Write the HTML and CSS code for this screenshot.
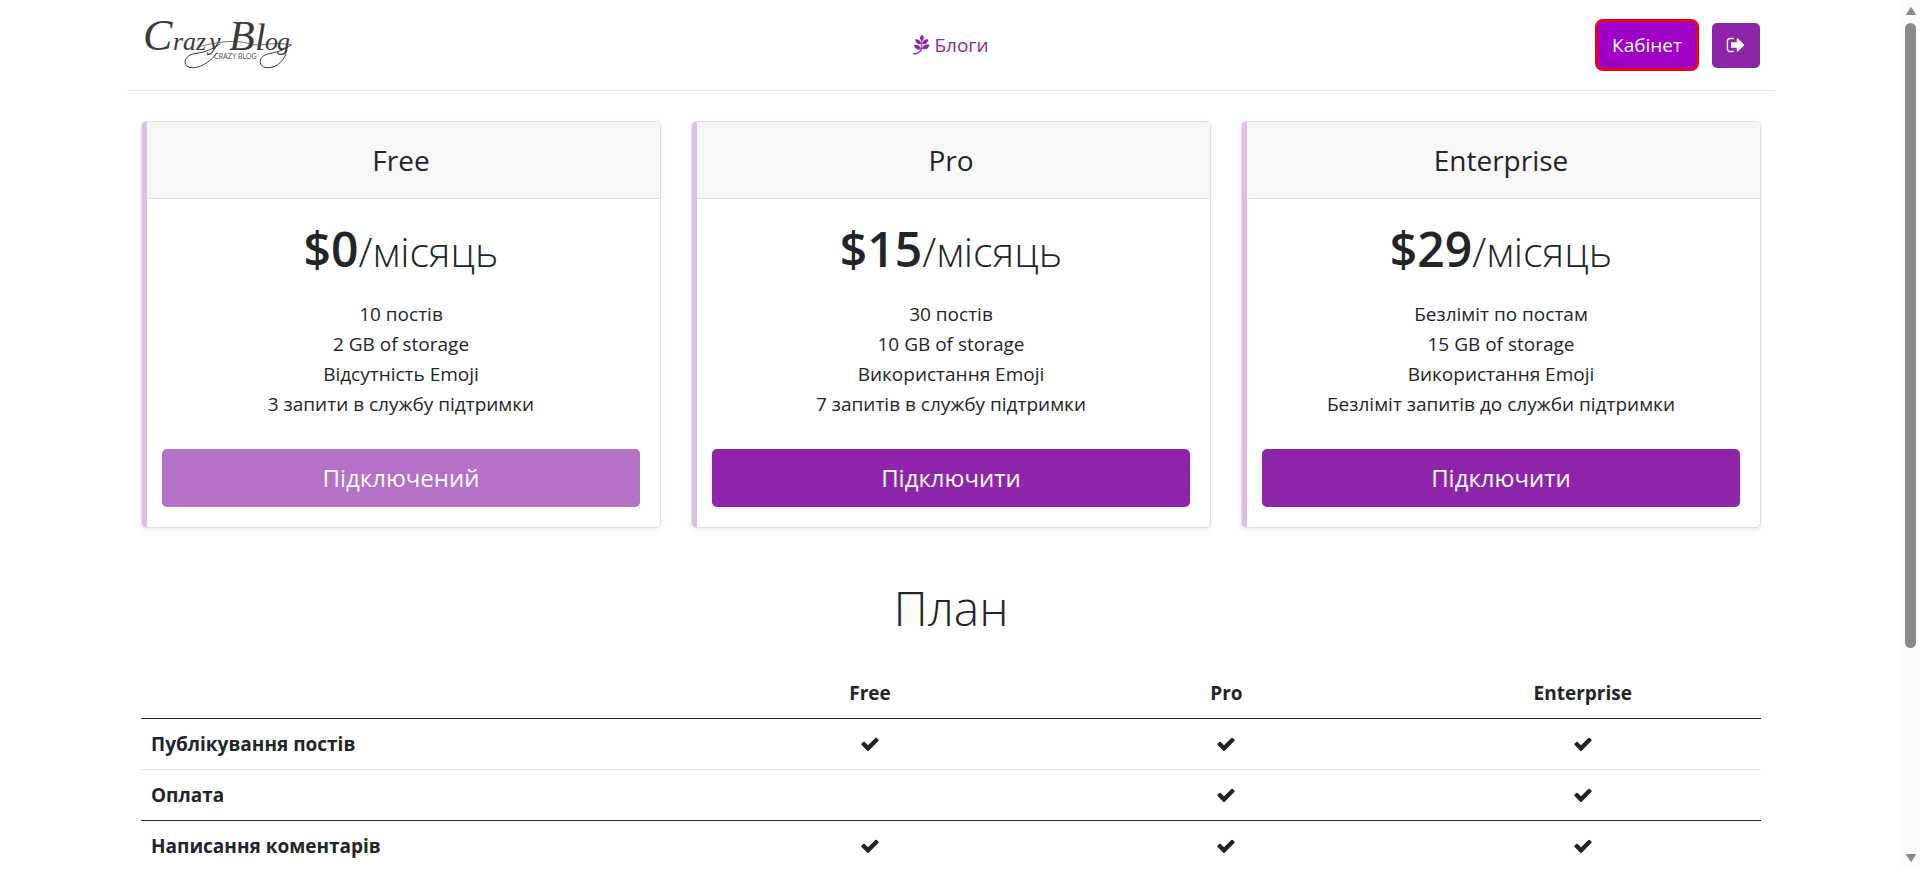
FILE: index.html
```html
<!DOCTYPE html>
<html lang="uk">
<head>
<meta charset="utf-8">
<meta name="viewport" content="width=device-width, initial-scale=1">
<title>Crazy Blog</title>
<link rel="stylesheet" href="styles.css">
</head>
<body>
<svg class="sprite" aria-hidden="true">
  <symbol id="check" viewBox="0 0 1792 1792"><path d="M1671 566q0 40-28 68l-724 724-136 136q-28 28-68 28t-68-28l-136-136-362-362q-28-28-28-68t28-68l136-136q28-28 68-28t68 28l294 295 656-657q28-28 68-28t68 28l136 136q28 28 28 68z"/></symbol>
</svg>
<div class="page">
  <div class="container">
    <header class="header">
      <a class="logo" href="#" aria-label="Crazy Blog">
        <svg width="150" height="52" viewBox="0 0 150 52" fill="none" stroke="#3a3a3a" stroke-linecap="round">
          <text class="logo-script" y="31" stroke="none"><tspan x="1" font-size="44">C</tspan><tspan x="31 41 54 67" font-size="26">razy</tspan><tspan x="87" font-size="42">B</tspan><tspan x="113" font-size="38">l</tspan><tspan x="123 135" font-size="26">og</tspan></text>
          <path d="M75 34C68 44 56 50 48 48.500C39 46 43 35 54 34.500C64 33 71 30 78 25"/>
          <path d="M144 35C140 44 133 50 123 48.500C115 46 117 36 128 34.500C137 33 144 30 149 26"/>
          <path d="M56 28C74 23 94 20 108 25C118 28 132 22 149 26" stroke-width=".7"/>
          <text class="logo-sub" x="72" y="40" font-size="7" stroke="none">CRAZY BLOG</text>
        </svg>
      </a>
      <nav class="nav">
        <a class="nav-link" href="#">
          <svg width="17" height="20" viewBox="0 0 17 20" fill="currentColor" aria-hidden="true">
            <path d="M0 18.200C4 18.200 7.500 16.500 8.300 13L9.500 13.300C8.500 17.500 4.500 19.600.3 19.600z"/>
            <path d="M8.200 5H9.300V13.500H8.200z"/>
            <path d="M8.700 0C11.500 1.500 11.500 4.300 9 6C6.300 4.300 6.300 1.800 8.700 0z"/>
            <path d="M8.200 9.200C7.900 5.600 5.500 3.900 2 4.300C2.500 7.800 5 9.700 8.200 9.200z"/>
            <path d="M9.300 9.200C9.400 5.600 12 3.900 15.400 4.300C15 7.800 12.500 9.700 9.300 9.200z"/>
            <path d="M8.100 13.900C7 10.200 4 9 .8 10.200C2 13.800 5 15.400 8.100 13.900z"/>
            <path d="M9.200 13.800C10 10.100 12.800 8.900 16.600 10C15.400 13.700 12.500 15.300 9.200 13.800z"/>
          </svg>
          <span>Блоги</span>
        </a>
      </nav>
      <div class="actions">
        <a class="btn btn-cabinet" href="#">Кабінет</a>
        <button class="btn btn-exit" type="button" aria-label="Вийти">
          <svg width="20" height="20" viewBox="0 0 1792 1792" fill="currentColor" aria-hidden="true"><path d="M704 1440q0 4 1 20t.5 26.500-3 23.500-10 19.500-20.500 6.500h-320q-119 0-203.500-84.500t-84.500-203.500v-704q0-119 84.500-203.500t203.500-84.500h320q13 0 22.500 9.500t9.500 22.500q0 4 1 20t.5 26.500-3 23.500-10 19.500-20.500 6.500h-320q-66 0-113 47t-47 113v704q0 66 47 113t113 47h312l11.500 1 11.500 3 8 5.500 7 9 2 13.500zm928-544q0 26-19 45l-544 544q-19 19-45 19t-45-19-19-45v-288h-448q-26 0-45-19t-19-45v-384q0-26 19-45t45-19h448v-288q0-26 19-45t45-19 45 19l544 544q19 19 19 45z"/></svg>
        </button>
      </div>
    </header>

    <main class="main">
      <section class="cards">
        <article class="card">
          <h4 class="card-title">Free</h4>
          <div class="card-body">
            <h1 class="price">$0<small class="period">/місяць</small></h1>
            <ul class="features">
              <li>10 постів</li>
              <li>2 GB of storage</li>
              <li>Відсутність Emoji</li>
              <li>3 запити в службу підтримки</li>
            </ul>
            <button class="btn btn-plan" type="button" disabled>Підключений</button>
          </div>
        </article>
        <article class="card">
          <h4 class="card-title">Pro</h4>
          <div class="card-body">
            <h1 class="price">$15<small class="period">/місяць</small></h1>
            <ul class="features">
              <li>30 постів</li>
              <li>10 GB of storage</li>
              <li>Використання Emoji</li>
              <li>7 запитів в службу підтримки</li>
            </ul>
            <button class="btn btn-plan" type="button">Підключити</button>
          </div>
        </article>
        <article class="card">
          <h4 class="card-title">Enterprise</h4>
          <div class="card-body">
            <h1 class="price">$29<small class="period">/місяць</small></h1>
            <ul class="features">
              <li>Безліміт по постам</li>
              <li>15 GB of storage</li>
              <li>Використання Emoji</li>
              <li>Безліміт запитів до служби підтримки</li>
            </ul>
            <button class="btn btn-plan" type="button">Підключити</button>
          </div>
        </article>
      </section>

      <h2 class="plan-title">План</h2>
      <table class="plans">
        <thead>
          <tr><th class="col-name"></th><th scope="col">Free</th><th scope="col">Pro</th><th scope="col">Enterprise</th></tr>
        </thead>
        <tbody>
          <tr>
            <th scope="row">Публікування постів</th>
            <td><svg class="check"><use href="#check"/></svg></td>
            <td><svg class="check"><use href="#check"/></svg></td>
            <td><svg class="check"><use href="#check"/></svg></td>
          </tr>
          <tr>
            <th scope="row">Оплата</th>
            <td></td>
            <td><svg class="check"><use href="#check"/></svg></td>
            <td><svg class="check"><use href="#check"/></svg></td>
          </tr>
        </tbody>
        <tbody>
          <tr>
            <th scope="row">Написання коментарів</th>
            <td><svg class="check"><use href="#check"/></svg></td>
            <td><svg class="check"><use href="#check"/></svg></td>
            <td><svg class="check"><use href="#check"/></svg></td>
          </tr>
        </tbody>
      </table>
    </main>
  </div>
</div>
<div class="scrollbar" aria-hidden="true">
  <svg width="12" height="10" viewBox="0 0 12 10"><path d="M6 1.500L10.500 8.500H1.500z"/></svg>
  <div class="track"><div class="thumb"></div></div>
  <svg width="12" height="10" viewBox="0 0 12 10"><path d="M6 8.500L1.500 1.500H10.500z"/></svg>
</div>
</body>
</html>
```

FILE: styles.css
```css
* { box-sizing: border-box; }

html { scrollbar-width: none; }

body {
  margin: 0;
  background: #fff;
  color: #212529;
  font-family: "Open Sans", "Noto Sans", sans-serif;
  font-size: 19px;
  line-height: 30px;
}

.sprite { display: none; }

.page { padding-right: 18px; }

.container {
  max-width: 1648px;
  margin: 0 auto;
}

.header {
  display: grid;
  grid-template-columns: 1fr auto 1fr;
  align-items: center;
  height: 91px;
  padding: 0 15px;
  border-bottom: 1px solid #dee2e6;
}

.logo, .logo svg { display: block; }
.logo svg { overflow: visible; }
.logo-script {
  fill: #3a3a3a;
  font-family: "Liberation Serif", serif;
  font-style: italic;
}
.logo-sub {
  fill: #555;
  font-family: "Lato", sans-serif;
}

.nav-link {
  display: flex;
  align-items: center;
  gap: 4px;
  color: #8e24aa;
  text-decoration: none;
}

.actions {
  display: flex;
  justify-content: flex-end;
  align-items: center;
  gap: 13px;
}

.btn {
  display: flex;
  align-items: center;
  justify-content: center;
  border: 0;
  border-radius: 5px;
  background: #8e24aa;
  color: #fff;
  font: inherit;
  text-decoration: none;
}
.btn-cabinet {
  padding: 8px 14px;
  border: 3px solid #e8001c;
  border-radius: 8px;
  background: #a000c8;
}
.btn-exit {
  width: 48px;
  height: 45px;
}

.main { padding: 30px 14px 0; }

.cards {
  display: grid;
  grid-template-columns: repeat(3, 1fr);
  gap: 30px;
  text-align: center;
}

.card {
  position: relative;
  overflow: hidden;
  border: 1px solid #dfdfdf;
  border-radius: 5px;
  box-shadow: 0 2px 5px rgba(0, 0, 0, 0.08);
}
.card::before {
  content: "";
  position: absolute;
  inset: 0 auto 0 0;
  width: 5px;
  background: #dcc0e4;
}

.card-title {
  margin: 0;
  padding: 20px;
  border-bottom: 1px solid #dfdfdf;
  background: #f7f7f7;
  font-size: 28px;
  font-weight: 400;
  line-height: 36px;
}

.card-body { padding: 20px; }

.price {
  margin: 0;
  font-size: 48px;
  font-weight: 600;
  line-height: 60px;
}
.period {
  font-size: 41px;
  font-weight: 300;
  line-height: 1;
}

.features {
  margin: 20px 0 30px;
  padding: 0;
  list-style: none;
}

.btn-plan {
  width: 100%;
  padding: 10px 20px;
  font-size: 24px;
  line-height: 38px;
}
.btn-plan:disabled { opacity: 0.65; }

.plan-title {
  margin: 50px 0 30px;
  font-size: 48px;
  font-weight: 300;
  line-height: 60px;
  text-align: center;
}

.plans {
  width: 100%;
  table-layout: fixed;
  border-collapse: separate;
  border-spacing: 0;
  text-align: center;
}
.plans th, .plans td {
  height: 51px;
  padding: 10px;
  border-bottom: 1px solid #dee2e6;
}
.plans th { font-weight: 700; }
.plans th[scope="row"] { text-align: left; }
.plans .col-name { width: 34%; }
.plans thead th,
.plans tbody tr:last-child > * { border-bottom-color: #212529; }

.check {
  display: block;
  width: 20px;
  height: 20px;
  margin: 0 auto;
  fill: #212529;
}

.scrollbar {
  position: fixed;
  inset: 0 0 0 auto;
  display: flex;
  flex-direction: column;
  align-items: center;
  width: 19px;
  padding: 6px 0;
  background: #fcfcfc;
}
.scrollbar svg { fill: #8a8a8a; stroke: #8a8a8a; stroke-linejoin: round; }
.track {
  flex: 1;
  width: 11px;
  padding: 7px 0;
}
.thumb {
  height: 76%;
  border-radius: 6px;
  background: #8a8a8a;
}
```
